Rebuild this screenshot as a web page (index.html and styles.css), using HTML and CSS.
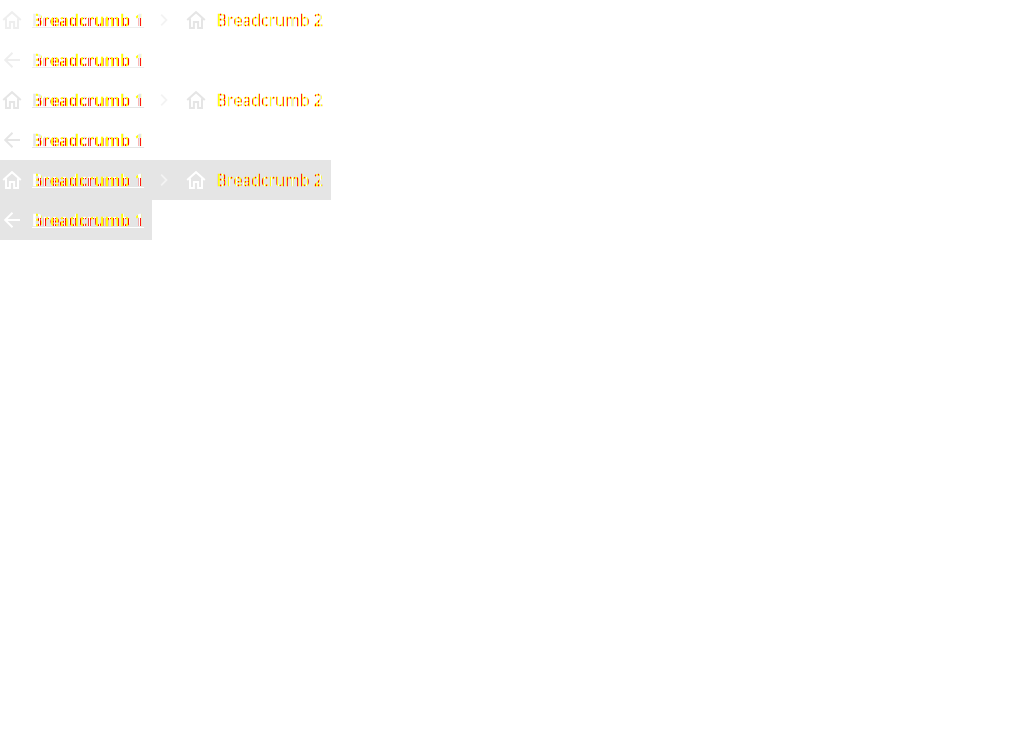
FILE: index.html
```html
<!DOCTYPE html>
<html lang="en">
<head>
<meta charset="utf-8">
<title>Breadcrumbs</title>
<link rel="stylesheet" href="styles.css">
</head>
<body>
<svg class="defs" aria-hidden="true">
  <symbol id="home" viewBox="0 0 24 24"><path d="M3.200 12.100 12 4.200l8.800 7.900M6 10.500V20h3.900v-6h4.200v6H18v-9.500" fill="none" stroke="currentColor" stroke-width="2"/></symbol>
  <symbol id="back" viewBox="0 0 24 24"><path d="M20 12H5.500M12.500 4.700 5.200 12l7.300 7.300" fill="none" stroke="currentColor" stroke-width="2"/></symbol>
  <symbol id="next" viewBox="0 0 24 24"><path d="m9.200 6.700 5.300 5.300-5.300 5.300" fill="none" stroke="currentColor" stroke-width="1.800"/></symbol>
</svg>
<nav class="crumbs soft">
  <a class="item link"><svg class="icon"><use href="#home"/></svg><span class="label">Breadcrumb 1</span></a>
  <svg class="icon next"><use href="#next"/></svg>
  <span class="item current"><svg class="icon"><use href="#home"/></svg><span class="label">Breadcrumb 2</span></span>
</nav>
<nav class="crumbs soft"><a class="item link"><svg class="icon"><use href="#back"/></svg><span class="label">Breadcrumb 1</span></a></nav>
<nav class="crumbs">
  <a class="item link"><svg class="icon"><use href="#home"/></svg><span class="label">Breadcrumb 1</span></a>
  <svg class="icon next"><use href="#next"/></svg>
  <span class="item current"><svg class="icon"><use href="#home"/></svg><span class="label">Breadcrumb 2</span></span>
</nav>
<nav class="crumbs"><a class="item link"><svg class="icon"><use href="#back"/></svg><span class="label">Breadcrumb 1</span></a></nav>
<nav class="crumbs inverse">
  <a class="item link"><svg class="icon"><use href="#home"/></svg><span class="label">Breadcrumb 1</span></a>
  <svg class="icon next"><use href="#next"/></svg>
  <span class="item current"><svg class="icon"><use href="#home"/></svg><span class="label">Breadcrumb 2</span></span>
</nav>
<nav class="crumbs inverse"><a class="item link"><svg class="icon"><use href="#back"/></svg><span class="label">Breadcrumb 1</span></a></nav>
</body>
</html>
```
FILE: styles.css
```css
body { margin: 0; background: #fff; font: 16px/24px "Open Sans", sans-serif; }
.defs { position: absolute; width: 0; height: 0; }
.crumbs { --ink: #e5e5e5; --next: #f3f3f3; display: flex; align-items: center; width: max-content; height: 40px; color: var(--ink); }
.soft .link { --ink: #eee; color: var(--ink); }
.inverse { --ink: #fff; background: #e5e5e5; }
.item { display: flex; align-items: center; gap: 8px; padding-right: 8px; }
.current { padding-left: 8px; }
.icon { display: block; width: 24px; height: 24px; flex: none; }
.next { color: var(--next); }
.label { width: 112px; height: 24px; line-height: 24px; white-space: nowrap; color: transparent; -webkit-background-clip: text; background-clip: text; }
.link .label {
  font-weight: 600;
  letter-spacing: .22px;
  -webkit-text-stroke: .6px transparent;
  text-decoration: underline var(--ink) 1px;
  text-underline-offset: 1px;
  text-decoration-skip-ink: none;
  background-image:
    repeating-linear-gradient(90deg, red 0 1px, transparent 1px 2px, red 2px 3px, transparent 3px 5px),
    repeating-linear-gradient(90deg, #ff0 0 1px, var(--ink) 1px 4px, #ff0 4px 5px);
  background-size: 104px 8px, 100% 19px;
  background-position: 6px 10px, 0 0;
  background-repeat: no-repeat;
}
.current .label {
  width: 107px;
  text-indent: .5px;
  -webkit-text-stroke: .3px transparent;
  background-image: repeating-linear-gradient(90deg, #ff0 0 1px, red 1px 2px, #ff0 2px 4px, red 4px 5px, #ff0 5px 6px, var(--ink) 6px 7px);
}
```
